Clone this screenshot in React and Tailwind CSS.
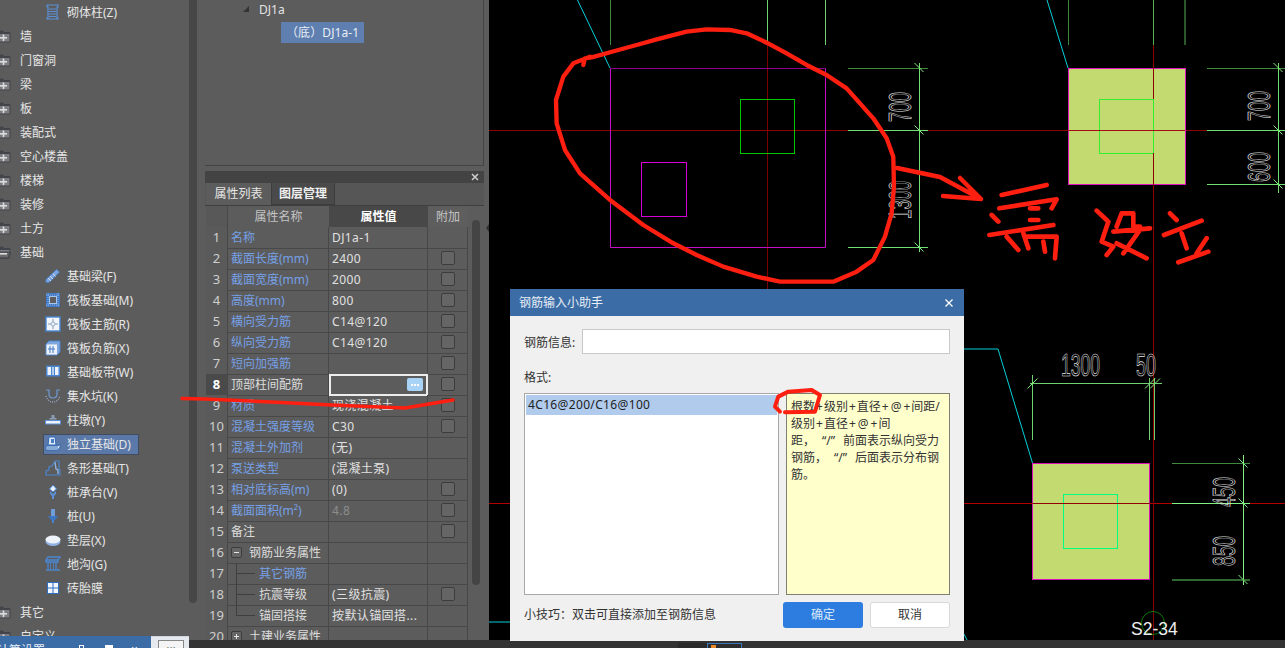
import React from "react";

const FONT = { fontFamily: '"Noto Sans","Noto Sans CJK SC",sans-serif' };
const B = "#5b8fd6";

const Icon = ({ children }) => (
  <svg width="16" height="16" viewBox="0 0 16 16" className="shrink-0">{children}</svg>
);

const icons = {
  Z: (
    <Icon>
      <path d="M2 1h11v2h-1v11h1v1H2v-1h1V3H2z" fill="none" stroke={B} strokeWidth="1.2" />
      <path d="M4 5h7M4 7.5h7M4 10h7M4 12.5h7" stroke={B} strokeWidth="1" />
    </Icon>
  ),
  F: (
    <Icon>
      <path d="M1 11.5 11.5 1.5 14.5 4 4 14.5H1z" fill="#7fa6de" stroke="#4b82cc" />
      <path d="M3 10l3 3M5 8l3 3M8 5.5l2.5 3" stroke="#dbe7f7" strokeWidth=".8" />
    </Icon>
  ),
  M: (
    <Icon>
      <rect x="1" y="1" width="14" height="14" fill="#3f78c4" />
      <rect x="4.500" y="4.500" width="7" height="7" fill="#5e5e5e" stroke="#a8c6ee" />
      <path d="M1 3h14M1 13h14M3 1v14M13 1v14" stroke="#a8c6ee" strokeWidth=".8" strokeDasharray="1 1" />
    </Icon>
  ),
  R: (
    <Icon>
      <rect x="1" y="1" width="14" height="14" fill="#f2f6fb" stroke="#4a86d0" strokeWidth="1.4" />
      <path d="M8 3v3.500M8 9.500V13M3 8h3.500M9.500 8H13" stroke="#7f9ab8" strokeWidth="1" />
      <circle cx="8" cy="8" r="2" fill="none" stroke="#9fb3c9" />
    </Icon>
  ),
  X1: (
    <Icon>
      <path d="M1 4l3-3h11v11l-3 3H1z" fill="#7ea7dc" stroke="#4a86d0" />
      <path d="M1.500 4.500h10.500v10H1.500z" fill="#eef3fa" />
      <path d="M5 6v7M8 6v7M3 9h7" stroke="#3f76c0" strokeWidth="1" />
    </Icon>
  ),
  W: (
    <Icon>
      <rect x="1" y="1.500" width="14" height="11" fill="#4a86d0" />
      <path d="M2.500 3h3.500v8H2.500zM10 3h3.500v8H10z" fill="#eef3fa" />
      <path d="M7.200 3h1.600v8H7.200z" fill="#cfe0f5" />
    </Icon>
  ),
  K: (
    <Icon>
      <path d="M1 2h3v4c0 3 2 4 4 4s4-1 4-4V2h3" fill="none" stroke="#6f9ad4" strokeWidth="1.2" />
      <path d="M1 8c1 4 4 6 7 6s6-2 7-6" fill="none" stroke="#93a8c2" strokeWidth="1.400" strokeDasharray="1 1.200" />
    </Icon>
  ),
  Y: (
    <Icon>
      <path d="M6.500 3h3v3h-3zM4.500 6h7v1.500h-7z" fill="#8a9db5" />
      <rect x="0.500" y="8.500" width="15" height="3.500" fill="#eef3fa" stroke="#5b8fd6" />
    </Icon>
  ),
  D: (
    <Icon>
      <path d="M4 1h6l1 8H3z" fill="#dfe9f7" stroke="#2f68b4" />
      <path d="M6 3h3v4H6z" fill="#4a80c8" />
      <path d="M1 10h12l2-2v3l-2 3H1z" fill="#dfe9f7" stroke="#2f68b4" />
      <path d="M2 12h11" stroke="#2f68b4" />
    </Icon>
  ),
  T: (
    <Icon>
      <path d="M1 15v-4l3-1V7l3-1 3-5h4v8l1 1v5z" fill="none" stroke="#4a86d0" strokeWidth="1.200" />
      <path d="M10 2l1 7 2 1v4" fill="none" stroke="#8fb2e0" strokeWidth="1.400" />
    </Icon>
  ),
  V: (
    <Icon>
      <path d="M8 1l3.500 4L8 8 4.500 5z" fill="#e8f0fa" stroke="#4a86d0" />
      <path d="M5 7l3 3 3-3v3l-2 2v3H7v-3l-2-2z" fill="#5b8fd6" />
    </Icon>
  ),
  U: (
    <Icon>
      <path d="M6 1h4v7H6z" fill="#6e9dd9" />
      <path d="M3 8h10l-3 4H6z" fill="#3f76c0" />
      <path d="M7 12h2v3H7z" fill="#4a86d0" />
    </Icon>
  ),
  X2: (
    <Icon>
      <ellipse cx="8" cy="9.500" rx="7.500" ry="4.500" fill="#8fb3e2" />
      <ellipse cx="8" cy="7.500" rx="7.500" ry="4" fill="#eef3fa" />
    </Icon>
  ),
  G: (
    <Icon>
      <path d="M3 1h12l-2 3H1zM1 4h12v2H1zM3 6v7M11 6v7M1 14h14" fill="none" stroke="#4a86d0" strokeWidth="1.300" />
      <path d="M5.500 6v7M8.500 6v7" stroke="#4a86d0" strokeWidth=".8" />
    </Icon>
  ),
  Q: (
    <Icon>
      <rect x="2" y="2" width="12" height="12" fill="#2f6fc4" />
      <path d="M3 3h4.500v4.500H3zM8.500 3H13v4.500H8.500zM3 8.500h4.500V13H3zM8.500 8.500H13V13H8.500z" fill="#f4f7fb" />
    </Icon>
  ),
};

const Folder = ({ open }) => (
  <svg width="14" height="14" viewBox="0 0 14 14" className="absolute left-[-3px] top-[6px]">
    <path d="M0 1h6l1 1.500h6V12H0z" fill="#7d7e84" stroke="#43444b" strokeWidth="1" />
    <path d="M0 1h6l1 1.500h6V4H0z" fill="#43444b" />
    {open ? <path d="M2 6h11l-2 6H0z" fill="#6a6a6a" stroke="#3d3f46" /> : null}
    <rect x="3" y="7" width="7" height="1.600" fill="#dcdcdc" />
    {open ? null : <rect x="5.700" y="4.500" width="1.600" height="6.600" fill="#dcdcdc" />}
  </svg>
);

const tree = [
  ["c", "砌体柱(Z)", "Z"],
  ["g", "墙"],
  ["g", "门窗洞"],
  ["g", "梁"],
  ["g", "板"],
  ["g", "装配式"],
  ["g", "空心楼盖"],
  ["g", "楼梯"],
  ["g", "装修"],
  ["g", "土方"],
  ["o", "基础"],
  ["c", "基础梁(F)", "F"],
  ["c", "筏板基础(M)", "M"],
  ["c", "筏板主筋(R)", "R"],
  ["c", "筏板负筋(X)", "X1"],
  ["c", "基础板带(W)", "W"],
  ["c", "集水坑(K)", "K"],
  ["c", "柱墩(Y)", "Y"],
  ["s", "独立基础(D)", "D"],
  ["c", "条形基础(T)", "T"],
  ["c", "桩承台(V)", "V"],
  ["c", "桩(U)", "U"],
  ["c", "垫层(X)", "X2"],
  ["c", "地沟(G)", "G"],
  ["c", "砖胎膜", "Q"],
  ["g", "其它"],
  ["g", "自定义"],
];

const TreeRow = ({ kind, label, icon }) => {
  if (kind === "g" || kind === "o") {
    return (
      <div className="relative h-[24px] flex items-center pl-[20px] pt-[2px] text-[12px] text-[#e6e6e6]">
        <Folder open={kind === "o"} />
        {label}
      </div>
    );
  }
  return (
    <div className="relative h-[24px] flex items-center text-[12px] text-[#e6e6e6]">
      {kind === "s" ? (
        <div className="absolute left-[43px] top-[2px] w-[96px] h-[21px] bg-[#5a79a9] border border-[#434c5e]" />
      ) : null}
      <span className="relative ml-[45px] w-[22px] flex">{icons[icon]}</span>
      <span className="relative top-[1px]">{label}</span>
    </div>
  );
};

const rows = [
  [1, "名称", "DJ1a-1", 0, "b"],
  [2, "截面长度(mm)", "2400", 1, "b"],
  [3, "截面宽度(mm)", "2000", 1, "b"],
  [4, "高度(mm)", "800", 1, "b"],
  [5, "横向受力筋", "C14@120", 1, "b"],
  [6, "纵向受力筋", "C14@120", 1, "b"],
  [7, "短向加强筋", "", 1, "b"],
  [8, "顶部柱间配筋", "", 1, "w"],
  [9, "材质", "现浇混凝土", 1, "b"],
  [10, "混凝土强度等级", "C30", 1, "b"],
  [11, "混凝土外加剂", "(无)", 0, "b"],
  [12, "泵送类型", "(混凝土泵)", 0, "b"],
  [13, "相对底标高(m)", "(0)", 1, "b"],
  [14, "截面面积(m²)", "4.8", 1, "b"],
  [15, "备注", "", 1, "w"],
  [16, "钢筋业务属性", "", 0, "w"],
  [17, "其它钢筋", "", 0, "b"],
  [18, "抗震等级", "(三级抗震)", 1, "w"],
  [19, "锚固搭接", "按默认锚固搭...", 0, "w"],
  [20, "土建业务属性", "", 0, "w"],
];

const Box = ({ sign }) => (
  <span className="w-[11px] h-[11px] shrink-0 border border-[#3c3c3c] rounded-[2px] bg-[#666] relative flex items-center justify-center">
    <span className="w-[5px] h-px bg-[#e6e6e6]" />
    {sign === "+" ? <span className="absolute w-px h-[5px] bg-[#e6e6e6]" /> : null}
  </span>
);

const Row = ({ r }) => {
  const [n, name, val, cb, col] = r;
  const indented = n >= 17 && n <= 19;
  return (
    <div className="grid grid-cols-[22px_101px_99px_40px] h-[21px] text-[12px]">
      <div
        className={
          "flex items-center justify-center pt-[1px] text-[13px] border-r border-b border-[#484848] " +
          (n === 8 ? "bg-[#4a4a4a] text-white font-bold" : "bg-[#5a5a5a] text-[#cfcfcf]")
        }
      >
        {n}
      </div>
      <div
        className={
          "relative flex items-center pt-[1px] border-r border-b border-[#484848] whitespace-nowrap " +
          (col === "b" ? "text-[#76a0e6] " : "text-[#dcdcdc] ") +
          (indented ? "pl-[31px]" : "pl-[3px]")
        }
      >
        {n === 16 ? <span className="mr-[7px]"><Box sign="-" /></span> : null}
        {n === 20 ? <span className="mr-[7px]"><Box sign="+" /></span> : null}
        {indented ? (
          <>
            <span className={"absolute left-[8px] top-0 w-px bg-[#3f3f3f] " + (n === 19 ? "h-[11px]" : "h-[21px]")} />
            <span className="absolute left-[8px] top-[10px] w-[19px] h-px bg-[#3f3f3f]" />
          </>
        ) : null}
        {name}
      </div>
      <div
        className={
          "relative flex items-center pl-[3px] pt-[1px] whitespace-nowrap tracking-[0.4px] " +
          (n === 8 ? "border-2 border-[#ececec] " : "border-r border-b border-[#484848] ") +
          (n === 14 ? "text-[#8c8c8c]" : "text-[#e0e0e0]")
        }
      >
        {val}
        {n === 8 ? (
          <span className="absolute right-[3px] top-[2px] w-[16px] h-[13px] rounded-[2px] bg-[#a9d2f7] flex items-center justify-center gap-[1px]">
            <span className="w-[2px] h-[2px] bg-white" />
            <span className="w-[2px] h-[2px] bg-white" />
            <span className="w-[2px] h-[2px] bg-white" />
          </span>
        ) : null}
      </div>
      <div className="flex items-center justify-center border-r border-b border-[#484848]">
        {cb ? <span className="w-[14px] h-[14px] rounded-[2px] border border-[#3c3c3c] bg-[#656565]" /> : null}
      </div>
    </div>
  );
};

const Cad = () => {
  const dimText = { fill: "none", stroke: "#ececec", strokeWidth: 0.7, fontFamily: "Liberation Sans", fontSize: 32 };
  const tickV = (x, y) => <path key={x + "-" + y} d={`M${x - 5} ${y - 5}L${x + 4} ${y + 4}`} stroke="#80f080" />;
  const tickH = (x, y) => <path key={x + "-" + y} d={`M${x - 5} ${y + 5}L${x + 5} ${y - 5}`} stroke="#80f080" />;
  return (
    <svg viewBox="489 0 796 640" width="796" height="640" className="block">
      <rect x="489" y="0" width="796" height="640" fill="#000" />
      <path d="M489 130.500H1285" stroke="#8b0000" />
      <path d="M767.500 45V289" stroke="#7d0000" />
      <path d="M489 503.500H1285" stroke="#b40000" />
      <path d="M577.500 0L610 68M1047 0L1068 68M964 349H998L1032.500 463M489 622H510" stroke="#00d0d8" fill="none" />
      <path d="M610.500 0V45" stroke="#3e8a3e" />
      <path d="M767.500 0V45M825.500 0V45" stroke="#70d070" />

      <path d="M610.500 68.500H825.500" stroke="#8c008c" />
      <path d="M825.500 68.500V247.500H610.500V68.500" fill="none" stroke="#c410c4" />
      <rect x="740.500" y="99.500" width="54" height="54" fill="none" stroke="#00c800" />
      <rect x="641.500" y="162.500" width="45" height="54" fill="none" stroke="#d800d8" />

      <path d="M848 68.500H928" stroke="#408a40" />
      <path d="M848 130.500H928M848 247.500H928M919.500 63V252" stroke="#70e070" />
      {tickV(919.5, 68)}
      {tickV(919.5, 130.5)}
      {tickV(919.5, 247.5)}
      <text transform="translate(911 122) rotate(-90) scale(.56 1)" {...dimText}>700</text>
      <text transform="translate(911 219) rotate(-90) scale(.535 1)" {...dimText}>1300</text>

      <path d="M1068.500 0V45" stroke="#3e8a3e" />
      <path d="M1153.500 0V45M1185 0V45" stroke="#55b055" />
      <rect x="1068.500" y="68.500" width="117" height="116" fill="#c2da70" stroke="#e010c0" />
      <rect x="1099.500" y="99.500" width="54" height="54" fill="none" stroke="#30f030" />
      <path d="M1068 130.500H1185" stroke="#a01010" />
      <path d="M1153.500 45V99M1153.500 153V640" stroke="#8b0000" />
      <path d="M1207 68.500H1285" stroke="#408a40" />
      <path d="M1207 130.500H1285M1207 184.500H1285M1278.500 63V193" stroke="#70e070" />
      {tickV(1278.5, 68)}
      {tickV(1278.5, 130.5)}
      {tickV(1278.5, 184.5)}
      <text transform="translate(1270 121) rotate(-90) scale(.56 1)" {...dimText}>700</text>
      <text transform="translate(1270 182) rotate(-90) scale(.56 1)" {...dimText}>600</text>

      <rect x="1032.500" y="463.500" width="117" height="116" fill="#c2da70" stroke="#d810b8" />
      <rect x="1063.500" y="494.500" width="54" height="54" fill="none" stroke="#00ff80" />
      <path d="M1032 503.500H1150" stroke="#900000" />
      <path d="M1032.500 375V440M1149.500 378V440M1154.500 378V440" stroke="#70d070" />
      <path d="M1030 383.500H1162" stroke="#70d070" />
      {tickH(1032.5, 383.5)}
      {tickH(1150, 383.5)}
      {tickH(1155, 383.5)}
      <text transform="translate(1061 376) scale(.55 1)" {...dimText}>1300</text>
      <text transform="translate(1136 376) scale(.56 1)" {...dimText}>50</text>
      <path d="M1172 463.500H1250" stroke="#408a40" />
      <path d="M1172 503.500H1250M1243.500 455V585" stroke="#80f080" />
      <path d="M1172 580H1250" stroke="#408a40" strokeWidth="1.500" />
      {tickV(1243.5, 463.5)}
      {tickV(1243.5, 503.5)}
      {tickV(1243.5, 580)}
      <text transform="translate(1235 507) rotate(-90) scale(.56 1)" {...dimText}>450</text>
      <text transform="translate(1235 566) rotate(-90) scale(.56 1)" {...dimText}>850</text>
      <circle cx="1153" cy="623" r="11.500" fill="none" stroke="#0a7a0a" />
      <text x="1131" y="635" fill="#eee" fontFamily="Liberation Sans" fontSize="17.500">S2-34</text>
      <path d="M964 634L967 640" stroke="#00d0d8" />
    </svg>
  );
};

const Annot = () => (
  <svg width="1285" height="648" viewBox="0 0 1285 648" className="absolute left-0 top-0 pointer-events-none">
    <g fill="none" stroke="#ff1f10" strokeLinecap="round" strokeLinejoin="round">
      <g transform="translate(540 0) scale(.3333)" strokeWidth="13">
        <path d="M130 195L135 175 155 172 235 150 290 135 350 118 440 95 500 88 570 90 620 100 680 128 740 160 800 195 860 225 920 265 960 310 1000 355 1040 415 1060 470 1062 560 1055 640 1035 710 1000 780 950 815 880 845 720 845 650 830 550 800 470 765 400 730 310 675 210 600 120 520 75 450 50 370 48 300 70 230 100 190 150 170" />
      </g>
      <path d="M897 168L940 177 981 199M943 196L981 199M960 178L981 199" strokeWidth="4.500" />
      <g transform="translate(940 0) scale(.3333)" strokeWidth="14">
        <path d="M185 585L320 555M178 625L350 598 335 625M155 645L175 665M270 625L295 625M270 660L295 660M148 705L340 675M200 710L235 750M250 700L265 745M255 710L350 710 345 775M310 725L315 755" />
        <path d="M470 632L500 660M505 665L485 725 520 740 500 765M545 640L530 680M545 640L580 640 580 680 600 680M520 695L630 685M600 690L550 760M530 730L620 775" />
        <path d="M690 640L710 660M672 705L785 662M725 700L740 745M800 715L770 760M715 787L805 755" />
      </g>
      <path d="M182 398.500L205 399 271 402 332 405 405 408 453 400" strokeWidth="3.500" />
      <g transform="translate(505 285) scale(.3333)" strokeWidth="12">
        <path d="M825 380L810 365 820 335 850 320 920 315 945 330 930 380 840 382" />
      </g>
    </g>
  </svg>
);

const Plus = () => <span className="mx-[1px]">+</span>;
const At = () => <span className="mx-[1px]">@</span>;

const Dialog = () => (
  <div className="absolute left-[510px] top-[289px] w-[454px] h-[352px] bg-[#f0f0f0] flex flex-col text-[12px] text-[#333]">
    <div className="h-[27px] bg-[#3b6ca6] flex items-center justify-between pl-[9px] pr-[10px] text-[#e8eef6]">
      <span>钢筋输入小助手</span>
      <svg width="10" height="10" viewBox="0 0 10 10">
        <path d="M1.500 1.500l7 7M8.500 1.500l-7 7" stroke="#fff" strokeWidth="1.300" />
      </svg>
    </div>
    <div className="flex-1 flex flex-col px-[14px] pt-[13px]">
      <div className="flex items-center h-[25px]">
        <span className="w-[58px] pt-[2px]">钢筋信息:</span>
        <div className="flex-1 h-full bg-white border border-[#c8c8c8]" />
      </div>
      <div className="h-[17px] mt-[15px] pt-[1px] flex items-center">格式:</div>
      <div className="flex gap-[7px] mt-[7px] h-[202px]">
        <div className="w-[255px] bg-white border border-[#a8a8a8] p-[1px]">
          <div className="h-[20px] bg-[#b0cbec] flex items-center pl-[2px] tracking-[0.35px] text-[#222]">4C16@200/C16@100</div>
        </div>
        <div className="flex-1 bg-[#ffffcc] border border-[#808070] pl-[4px] pt-[4px] leading-[17px] whitespace-nowrap text-[#333]">
          <div>根数<Plus />级别<Plus />直径<Plus /><At /><Plus />间距/</div>
          <div>级别<Plus />直径<Plus /><At /><Plus />间</div>
          <div>距，<span className="ml-[7px]">“/”</span><span className="ml-[8px]">前面表示纵向受力</span></div>
          <div>钢筋，<span className="ml-[7px]">“/”</span><span className="ml-[8px]">后面表示分布钢</span></div>
          <div>筋。</div>
        </div>
      </div>
      <div className="flex items-center justify-between mt-[7px] h-[26px]">
        <span>小技巧：双击可直接添加至钢筋信息</span>
        <div className="flex gap-[7px]">
          <div className="w-[80px] h-[26px] rounded-[3px] bg-[#2d7de0] text-[#dbe9fa] flex items-center justify-center">确定</div>
          <div className="w-[80px] h-[26px] rounded-[3px] bg-white border border-[#d8d8d8] text-[#333] flex items-center justify-center">取消</div>
        </div>
      </div>
    </div>
  </div>
);

export default function App() {
  return (
    <div style={FONT} className="relative w-[1285px] h-[648px] overflow-hidden bg-[#333] flex flex-col">
      <div className="h-[640px] flex shrink-0">
        {/* left tree */}
        <div className="relative w-[205px] h-full overflow-hidden bg-[#5c5c5c] shrink-0">
          <div className="w-[189px]">
            {tree.map((t) => (
              <TreeRow key={t[1]} kind={t[0]} label={t[1]} icon={t[2]} />
            ))}
          </div>
          <div className="absolute left-[189px] top-0 w-[8px] h-[603px] bg-[#474747] rounded-b-[4px]" />
        </div>

        {/* middle */}
        <div className="relative w-[284px] h-full bg-[#5c5c5c] shrink-0 flex flex-col">
          <div className="h-[166px] shrink-0 mr-[5px] border-r border-b border-[#444] pt-[1px] text-[12px] text-[#e4e4e4]">
            <div className="h-[16px] flex items-center pl-[38px]">
              <span className="w-0 h-0 mr-[10px] border-l-[6px] border-l-transparent border-b-[6px] border-b-[#333]" />
              <span className="relative top-[1px]">DJ1a</span>
            </div>
            <div className="ml-[76px] mt-[5px] w-[83px] h-[21px] bg-[#5f7fb0] flex items-center pl-[5px] tracking-[0.1px] text-[#e8eef6]">（底）DJ1a-1</div>
          </div>
          <div className="h-[5px] shrink-0" />
          <div className="h-[12px] mr-[5px] shrink-0 bg-[#434343] flex items-center justify-end pr-[5px]">
            <svg width="8" height="8" viewBox="0 0 8 8">
              <path d="M1 1l6 6M7 1L1 7" stroke="#cfcfcf" strokeWidth="1.500" />
            </svg>
          </div>
          <div className="flex-1 min-h-0 mr-[5px] overflow-hidden bg-[#565656] text-[12px]">
            <div className="h-[23px] flex items-end border-b border-[#3f3f3f] pl-[1px]">
              <div className="w-[65px] h-[23px] bg-[#5c5c5c] text-[#e6e6e6] pt-[1px] flex items-center justify-center">属性列表</div>
              <div className="w-[64px] h-[23px] bg-[#4a4a4a] border border-[#3c3c3c] text-[#f0f0f0] font-bold flex items-center justify-center">图层管理</div>
            </div>
            <div className="relative bg-[#5c5c5c] pl-[1px] h-full">
              <div className="grid grid-cols-[22px_101px_99px_40px] h-[21px] text-[12px]">
                <div className="bg-[#585858] border-r border-[#484848]" />
                <div className="bg-[#5c5c5c] text-[#c4c4c4] pt-[1px] flex items-center justify-center">属性名称</div>
                <div className="bg-[#484848] text-white font-bold pt-[1px] flex items-center justify-center">属性值</div>
                <div className="bg-[#5e5e5e] text-[#c4c4c4] pt-[1px] flex items-center justify-center">附加</div>
              </div>
              {rows.map((r) => (
                <Row key={r[0]} r={r} />
              ))}
              <div className="absolute left-[267px] top-[14px] w-[8px] h-[365px] rounded-[4px] bg-[#444]" />
            </div>
          </div>
          <div className="absolute right-0 top-[224px] w-0 h-0 border-y-[4px] border-y-transparent border-r-[3px] border-r-[#333]" />
        </div>

        {/* canvas */}
        <div className="flex-1 min-w-0 bg-black">
          <Cad />
        </div>
      </div>

      {/* bottom status bar */}
      <div className="h-[8px] relative bg-[#333]">
        <div className="absolute left-[678px] top-[3px] w-[29px] h-[5px] bg-[#2a2a2a]" />
        <div className="absolute left-[707px] top-[3px] w-[35px] h-[5px] bg-[#2c2c2c] border-t border-x border-[#3b77b8]">
          <span className="absolute left-[3px] top-[1px] w-[5px] h-[4px] bg-[#e8892e]" />
        </div>
      </div>

      {/* floating window clipped at the bottom */}
      <div className="absolute left-0 top-[636px] w-[189px] h-[12px] flex overflow-hidden text-[12px]">
        <div className="relative w-[151px] bg-[#3b6ca6] text-[#e8eef6]">
          <span className="absolute left-[-3px] top-[6px] whitespace-nowrap">计算设置</span>
          <span className="absolute left-[79px] top-[9px] w-[5px] h-[5px] border border-white" />
          <span className="absolute left-[105px] top-[9px] w-[8px] h-[3px] bg-white" />
          <span className="absolute left-[131px] top-[5px] text-white">×</span>
        </div>
        <div className="flex-1 bg-[#e6e9ee] border-t border-[#cfd6e0] pl-[7px] pt-[3px]">
          <div className="w-[26px] h-[12px] bg-[#f4f4f4] border border-[#888] text-center leading-[8px] text-[#333]">...</div>
        </div>
      </div>

      <Dialog />
      <Annot />
    </div>
  );
}
